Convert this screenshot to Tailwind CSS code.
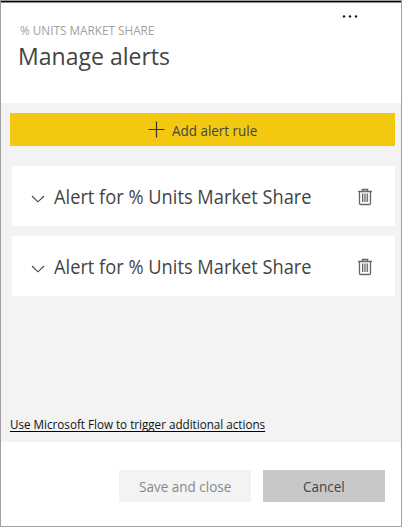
<!DOCTYPE html>
<html lang="en">
<head>
<meta charset="utf-8">
<title>Manage alerts</title>
<script src="https://cdn.jsdelivr.net/npm/@tailwindcss/browser@4"></script>
</head>
<body class="font-['Open_Sans','Noto_Sans',sans-serif] text-[#444444]">
<svg class="hidden">
  <symbol id="trash" viewBox="0 0 16 18"><g fill="none" stroke="#666"><path d="M1 3.5H15M5.5 3V1.5H10.5V3" stroke-width="1.5"/><path d="M2.5 4V15.2Q2.5 16.5 3.8 16.5H12.2Q13.5 16.5 13.5 15.2V4" stroke-width="1.3"/><path d="M5.5 5.5V14M7.2 5.5V14M8.9 5.5V14M10.6 5.5V14" stroke-width="1"/></g></symbol>
  <symbol id="chevron" viewBox="0 0 14 8"><path d="M1 1L7 6.8L13 1" fill="none" stroke="#444" stroke-width="1.1"/></symbol>
</svg>
<main class="flex h-[527px] w-[402px] flex-col border border-[#a0a0a0] bg-white">
  <div class="h-[2px] shrink-0 border-b border-[#8c8c8c] bg-black"></div>
  <header class="flex h-[100px] shrink-0 justify-between pl-[17px]">
    <div class="pt-[20px]">
      <p class="flex h-4 items-center pl-[2px] text-[12px] leading-4 whitespace-nowrap text-[#a0a0a0]"><span class="inline-block origin-left scale-x-[.98]">% UNITS MARKET SHARE</span></p>
      <h1 class="mt-px text-[24px] leading-[32px] whitespace-nowrap"><span class="inline-block origin-left scale-x-[.96]">Manage alerts</span></h1>
    </div>
    <svg class="mt-[11px] mr-[42px] h-[5px] w-[18px]" viewBox="0 0 18 5" fill="#111"><circle cx="3" cy="2.4" r="1.2"/><circle cx="9" cy="2.4" r="1.2"/><circle cx="15" cy="2.4" r="1.2"/></svg>
  </header>
  <section class="flex h-[339px] shrink-0 flex-col bg-[#f3f3f3] pt-[10px] pr-[6px] pl-[9px]">
    <button class="flex h-[33px] shrink-0 items-center bg-[#f2c811] pl-[137.5px] text-left text-[14px] whitespace-nowrap">
      <svg class="h-[17px] w-[17px] shrink-0" viewBox="0 0 17 17"><path d="M8.5 .5V16.5M.5 8.5H16.5" stroke="#333" stroke-width="1.2"/></svg>
      <span class="mt-[2px] ml-[7.5px] inline-block origin-left scale-x-[.96]">Add alert rule</span>
    </button>
    <div class="mt-5 ml-[2px] flex flex-col gap-[10px]">
      <article class="flex h-[60px] items-center bg-white pl-[19px]">
        <svg class="mt-[6px] h-[8px] w-[14px] shrink-0"><use href="#chevron"/></svg>
        <h2 class="mt-[2px] ml-[9px] w-[295px] text-[20px] leading-8 whitespace-nowrap"><span class="inline-block origin-left scale-x-[.913]">Alert for % Units Market Share</span></h2>
        <svg class="mt-px ml-[8px] h-[18px] w-[16px] shrink-0"><use href="#trash"/></svg>
      </article>
      <article class="flex h-[60px] items-center bg-white pl-[19px]">
        <svg class="mt-[6px] h-[8px] w-[14px] shrink-0"><use href="#chevron"/></svg>
        <h2 class="mt-[2px] ml-[9px] w-[295px] text-[20px] leading-8 whitespace-nowrap"><span class="inline-block origin-left scale-x-[.913]">Alert for % Units Market Share</span></h2>
        <svg class="mt-px ml-[8px] h-[18px] w-[16px] shrink-0"><use href="#trash"/></svg>
      </article>
    </div>
    <a class="mt-auto mb-[9px] block text-[12px] leading-4 whitespace-nowrap text-[#111]"><span class="inline-block h-[15px] origin-left scale-x-[.97] border-b border-black">Use Microsoft Flow to trigger additional actions</span></a>
  </section>
  <footer class="flex justify-end gap-[12px] pt-[28px] pr-[16px] text-[14px] whitespace-nowrap">
    <button class="h-8 w-[132px] bg-[#f3f3f3] pl-[19.5px] text-left text-[#888]"><span class="mt-px inline-block origin-left scale-x-[.965]">Save and close</span></button>
    <button class="h-8 w-[122px] bg-[#c8c8c8] pl-[40px] text-left"><span class="mt-px inline-block origin-left scale-x-[.965]">Cancel</span></button>
  </footer>
</main>
</body>
</html>
